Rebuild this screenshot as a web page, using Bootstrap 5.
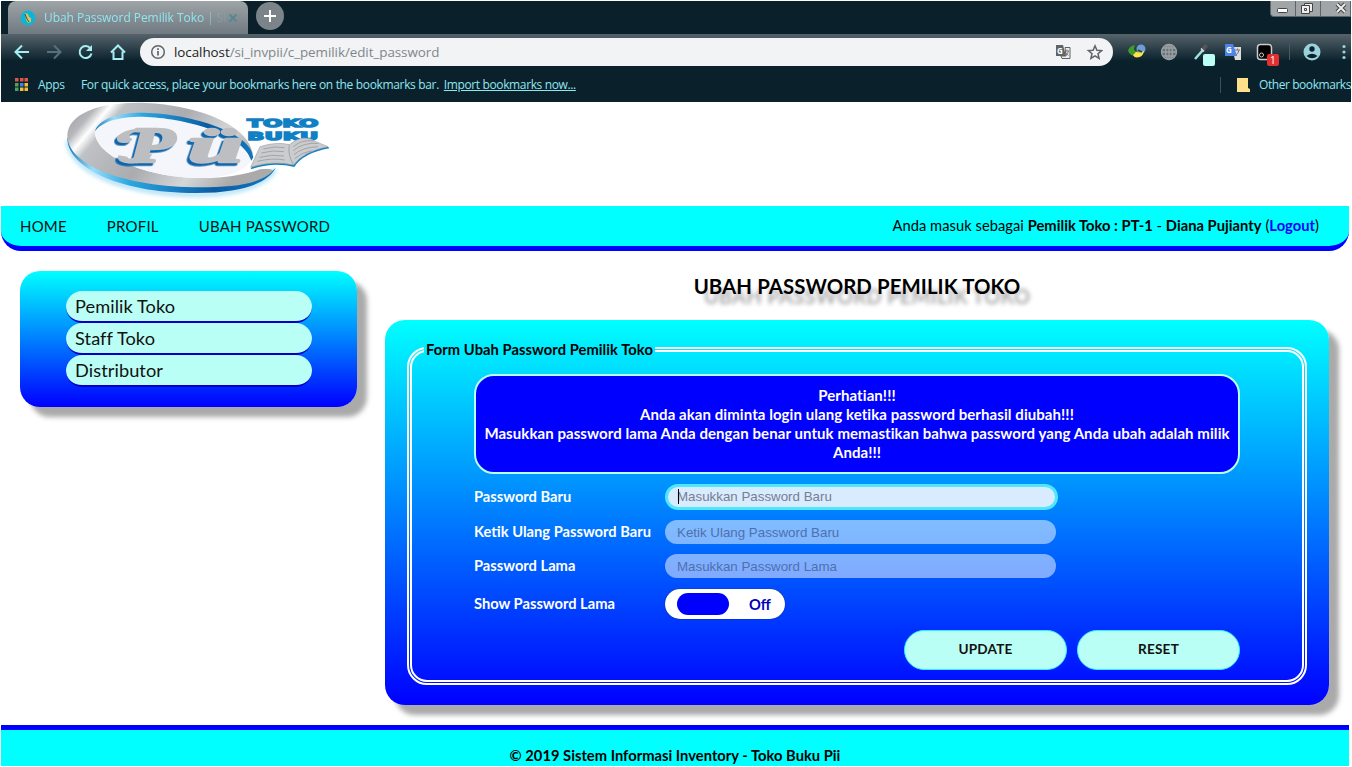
<!DOCTYPE html>
<html lang="id">
<head>
<meta charset="utf-8">
<title>Ubah Password Pemilik Toko | Sistem Informasi Inventory</title>
<link rel="stylesheet" href="https://cdn.jsdelivr.net/npm/bootstrap@5.3.0/dist/css/bootstrap.min.css">
<style>
body{width:1352px;height:767px;overflow:hidden;background:#fff;color:#000;font-family:Lato,"Liberation Sans",sans-serif;font-size:14.7px;padding:1px 2px 0 1px}
svg{display:block;flex:none}
.browser{height:101px;width:1350px;background:#0a212c;color:#8fe6f0;font-family:"Open Sans","Noto Sans",sans-serif;font-size:12px;overflow:hidden}
.tabstrip{height:33px;padding-left:7px}
.tab-on{width:240px;height:33px;background:linear-gradient(#9ea4a7,#6f7a81);border-radius:8px 8px 0 0;padding-left:12px}
.tab-label{width:184px;-webkit-mask-image:linear-gradient(90deg,#000 155px,rgba(0,0,0,.15) 176px);letter-spacing:-.05px;margin-left:8px}
.plus{width:28px;height:28px;border-radius:50%;background:#7b8489;margin:1px 0 0 8px}
.win{width:81px;height:16px;background:#a0a5a8;border:1px solid #59666d;border-top:0;border-radius:0 0 0 4px}
.toolbar{height:35px;background:linear-gradient(#56636b,#0a212c 27px);padding-left:13px}
.navicons{margin-right:9px}
.omni{width:973px;height:28px;border-radius:14px;background:#f1f3f4;color:#80868b;padding:0 10px}
.url{font-size:13.4px;letter-spacing:-.05px;padding-top:1px}
.url span{color:#222}
.exts{margin-left:11px}
.marks{height:33px;padding:0 0 2px 14px;gap:16px}
.apps{width:50px;gap:10px}
.vline{width:1px;height:16px;background:#3c5059}
.hint{letter-spacing:-.34px}
.hint u{letter-spacing:-.37px;margin-left:2px}
.other{letter-spacing:-.44px;gap:9px}
.t{white-space:nowrap;display:inline-block}
.logo-bar{height:104px;padding-left:49px}
.letters{filter:drop-shadow(-8px 8px 0 #0e65ab)}
.site-nav{width:1348px;height:45px;background:#0ff;border-bottom:5px solid #00f;border-radius:0 0 20px 20px;padding:0 30px 0 19px;gap:40px}
.site-nav>a{color:#111;text-decoration:none;font-size:15px;letter-spacing:.2px}
.user{letter-spacing:.04px;padding-bottom:1px}
.user a{color:#00f;text-decoration:none}
.content-row{height:474px;padding:20px 0 0 19px;gap:28px}
.panel{background:linear-gradient(#0ff,#00f);border-radius:20px;box-shadow:10px 10px 5px #aaa}
.side{width:337px;height:136px;padding:20px 45px 0 46px}
.side a{height:32px;background:#b9fff5;border-bottom:2px solid #00c;border-radius:16px;padding-left:9px;color:#111;text-decoration:none;font-size:18.2px;letter-spacing:.08px;line-height:30px}
.heading{font-size:20.4px;font-weight:700;line-height:24px;text-shadow:10px 10px 4px #aaa;margin:3px 0 22px;letter-spacing:.07px}
.main{width:944px;height:385px;padding:19px 22px}
fieldset.frame{height:346px;border:5px double #fff;border-radius:20px;padding:0 62px;margin:0}
fieldset.frame legend{float:none;width:auto;font-size:14.7px;letter-spacing:.07px;font-weight:700;line-height:20px;margin:0 0 0 -50px;padding:0 2px;height:21px}
.warn{height:100px;background:#00f;border:2px solid #b9fff5;border-radius:20px;color:#fff;font-weight:700;font-size:15px;letter-spacing:.07px;line-height:19px;padding-top:10px;margin:14px 0 10px}
.form-line{margin-bottom:10px}
.lbl{width:191px;color:#fff;font-weight:700;line-height:20px;padding-bottom:2px}
.fld{width:391px;height:24px;border:0;border-radius:12px;background:rgba(255,255,255,.5);padding:0 12px;font:13.33px "Liberation Sans",Arial,sans-serif;outline:0}
.fld::placeholder{color:#4f70ad;opacity:1}
.fld.on{width:393px;height:26px;border:3px solid #4ee7fb;border-radius:13px;background:#d8ebff;padding:0 9px 1px}
.fld.on::placeholder{color:#757f8f}
.caret{left:13px;top:5px;width:1px;height:15px;background:#000}
.sw{width:120px;height:30px;border-radius:15px;background:#fff;box-shadow:0 0 1px #003;padding-left:12px;color:#00b;font-weight:700;margin-top:1px}
.knob{width:52px;height:22px;border-radius:11px;background:#00f;margin-right:20px}
.actions{gap:10px;padding-top:1px}
.go{width:163px;height:40px;border-radius:20px;background:#b9fff5;border:1px solid #3ef;color:#111;font:700 13.6px Lato,sans-serif;padding:0 0 2px;letter-spacing:.2px}
.foot{width:1348px;height:41px;border-top:5px solid #00f;background:#0ff;font-weight:700;padding-top:14px;letter-spacing:.03px}
</style>
</head>
<body>
<header class="browser">
  <div class="tabstrip d-flex">
    <div class="tab-on d-flex align-items-center">
      <svg width="16" height="16" viewBox="0 0 16 16"><circle cx="8" cy="8" r="7.4" fill="#0ab6d6"/><path d="M5 3l3 1 1 3 2 1v4l-3 1-2-3z" fill="#d9c06a"/><path d="M5 4l2 5 2 3" stroke="#5b4a20" fill="none"/></svg>
      <div class="tab-label"><span class="t">Ubah Password Pemilik Toko | Si</span></div>
      <svg width="10" height="10" viewBox="0 0 10 10"><path d="M1.500 1.500l7 7M8.500 1.500l-7 7" stroke="#568692" stroke-width="1.800"/></svg>
    </div>
    <div class="plus d-flex align-items-center justify-content-center"><svg width="14" height="14" viewBox="0 0 14 14"><path d="M7 1v12M1 7h12" stroke="#fff" stroke-width="2"/></svg></div>
    <div class="win ms-auto"><svg width="80" height="15" viewBox="0 0 80 15"><path d="M24.500 0v15M49.500 0v15" stroke="#59666d"/><rect x="6.500" y="7.500" width="10" height="4" rx="1" fill="#fff" stroke="#444"/><g fill="#eee" stroke="#444"><path d="M33.500 2.500h8v8h-8z"/><path d="M30.500 4.500h8v8h-8z"/><path d="M33.500 7.500h2v2h-2z"/></g><path d="M66 3l8 8M74 3l-8 8" stroke="#444" stroke-width="4"/><path d="M66 3l8 8M74 3l-8 8" stroke="#eee" stroke-width="2"/></svg></div>
  </div>
  <div class="toolbar d-flex align-items-center">
    <svg class="navicons" width="117" height="20" viewBox="0 0 117 20" fill="none" stroke="#a5eef3" stroke-width="2"><path d="M15 10H2M8 3.500L1.500 10L8 16.500"/><path d="M33 10h13M40 3.500L46.500 10L40 16.500" stroke="#57717a"/><path d="M76.500 6.500A6 6 0 1 0 77.500 11.500"/><path d="M78 3v6h-6z" fill="#a5eef3" stroke="none"/><path d="M97 10.500l7-7 7 7M99.500 9.500v7.500h9v-7.500"/></svg>
    <div class="omni d-flex align-items-center">
      <svg width="16" height="16" viewBox="0 0 16 16" class="me-2"><circle cx="8" cy="8" r="6.300" fill="none" stroke="#5f6368" stroke-width="1.500"/><path d="M8 7v4.500M8 4.200v1.700" stroke="#5f6368" stroke-width="1.700"/></svg>
      <span class="t url"><span>localhost</span>/si_invpii/c_pemilik/edit_password</span>
      <svg width="48" height="18" viewBox="0 0 48 18" class="ms-auto"><path d="M1 2h7l3 11H1z" fill="#5f6368"/><path d="M10 4.500h5v11H7l-1-2.500h5z" fill="#eee" stroke="#5f6368"/><path d="M10 8h4M12 6.500V8M13.500 8q-.5 3-3 5M11 9.500q1 2 2.500 3" stroke="#5f6368" stroke-width=".8" fill="none"/><text x="2" y="10.500" font-size="8" fill="#fff" font-weight="700">G</text><path d="M40 2.800l1.900 4.400 4.700.4-3.600 3.100 1.100 4.700-4.100-2.500-4.100 2.500 1.100-4.700-3.600-3.100 4.700-.4z" fill="none" stroke="#5f6368" stroke-width="1.500"/></svg>
    </div>
    <svg class="exts" width="226" height="30" viewBox="0 0 226 30">
      <circle cx="17" cy="12" r="4.500" fill="#6c9dd8"/><path d="M4 14q1-5 7-6-2 4 0 6l6 1-5 4q-6 0-8-5z" fill="#3f9b2a"/><path d="M9 18l3-3 5 .5 3-2q-1 7-7 7-3 0-4-2.500z" fill="#ffe14a"/><path d="M14 13l4 2" stroke="#2c4a30" stroke-width="1.500"/>
      <g stroke="#9ba1a4" fill="none" stroke-width="1.300"><circle cx="45" cy="15" r="7.500" fill="#66717a"/><ellipse cx="45" cy="15" rx="3.500" ry="7.500"/><path d="M45 7.500v15M37.500 15h15M39 11h12M39 19h12"/></g>
      <path d="M71 22l8-9" stroke="#9de3e3" stroke-width="2.500"/><path d="M78.500 13l4-5" stroke="#555" stroke-width="4"/><path d="M77 11.500l3 3" stroke="#ddd" stroke-width="1.500"/><rect x="79" y="17" width="12" height="12" rx="2" fill="#b9fff5"/>
      <path d="M108 10h9v13h-6z" fill="#ddd"/><path d="M101 7h8l4 12h-12z" fill="#4a86e8"/><text x="102" y="16" font-size="8" font-weight="700" fill="#fff">G</text><path d="M111 13h5M113.500 11.500V13M115 13q-1 4-3 5" stroke="#777" fill="none"/>
      <rect x="133.500" y="7.500" width="14" height="15" rx="3" fill="#000" stroke="#ccc" stroke-width="1.500"/><circle cx="137.500" cy="18" r="2" fill="none" stroke="#ccc"/><rect x="143" y="17" width="12" height="12" rx="2" fill="#e22f2f"/><text x="146" y="26.500" font-size="10" fill="#fff">1</text>
      <path d="M165.500 7v16" stroke="#4a5a62"/>
      <circle cx="188" cy="15" r="8.500" fill="#9bd3dd"/><circle cx="188" cy="12" r="2.700" fill="#0a212c"/><path d="M182.500 19q5.500-4.500 11 0-5.500 4.500-11 0" fill="#0a212c"/>
      <g fill="#9bd3dd"><circle cx="220" cy="9.500" r="1.600"/><circle cx="220" cy="15" r="1.600"/><circle cx="220" cy="20.500" r="1.600"/></g>
    </svg>
  </div>
  <div class="marks d-flex align-items-center">
    <div class="apps d-flex align-items-center">
      <svg width="13" height="13" viewBox="0 0 13 13"><path d="M0 0h3.500v3.500H0zM5 0h3.500v3.500H5zM9.500 0H13v3.500H9.500z" fill="#e0554a"/><path d="M0 5h3.500v3.500H0zM0 9.500h3.500V13H0z" fill="#4ea35a"/><path d="M5 5h3.500v3.500H5z" fill="#4a7fe0"/><path d="M9.500 5H13v3.500H9.500zM5 9.500h3.500V13H5zM9.500 9.500H13V13H9.500z" fill="#f0bf3c"/></svg>
      <span class="t hint">Apps</span>
    </div>
    <span class="t hint">For quick access, place your bookmarks here on the bookmarks bar. <u>Import bookmarks now...</u></span>
    <span class="vline ms-auto"></span>
    <div class="other d-flex align-items-center ms-n1">
      <svg width="13" height="14" viewBox="0 0 13 14"><path d="M0 0h11v10l2 1v3H0z" fill="#fde08a"/></svg>
      <span class="t">Other bookmarks</span>
    </div>
  </div>
</header>

<div class="logo-bar">
  <svg width="300" height="104" viewBox="0 12 900 312" role="img" aria-label="Toko Buku Pii">
    <defs>
      <linearGradient id="ring" x1="0" y1="0" x2="1" y2=".35"><stop offset="0" stop-color="#999ba0"/><stop offset=".14" stop-color="#b5b7ba"/><stop offset=".2" stop-color="#fff"/><stop offset=".26" stop-color="#bfc1c4"/><stop offset=".55" stop-color="#aaacb0"/><stop offset=".8" stop-color="#d5d6d8"/><stop offset="1" stop-color="#aaa"/></linearGradient>
      <linearGradient id="blue"><stop offset="0" stop-color="#1179b8"/><stop offset=".12" stop-color="#9adcf8"/><stop offset=".3" stop-color="#2ba6e0"/><stop offset=".7" stop-color="#0a5da5"/><stop offset="1" stop-color="#1177bd"/></linearGradient>
      <filter id="glow" x="-10%" y="-20%" width="120%" height="150%"><feGaussianBlur stdDeviation="7"/></filter>
    </defs>
    <path d="M52 130C75 240 260 290 450 290C580 288 650 255 675 215" fill="none" stroke="#a8ddf5" stroke-width="12" filter="url(#glow)"/>
    <path d="M52 118C50 200 190 285 440 285C590 285 655 250 677 210C640 248 560 262 450 262C250 262 100 210 52 118z" fill="url(#blue)"/>
    <path d="M52 112C55 45 150 12 275 14C420 18 590 70 608 165L600 185C580 100 400 52 270 52C190 52 140 75 135 105C140 180 300 240 450 240C540 240 600 225 630 214C655 212 670 213 668 220C630 258 550 268 450 268C220 268 50 200 52 112z" fill="url(#ring)"/>
    <path d="M135 103C150 70 200 56 280 56C410 60 590 110 602 187C590 220 520 240 450 240C300 240 140 180 135 103z" fill="#f5f6fb"/>
    <path d="M135 100C145 65 200 43 280 44C430 48 605 105 610 178L604 188C580 105 400 60 280 56C200 56 155 72 135 100z" fill="url(#blue)"/>
    <g class="letters" fill="#bcbec2" stroke="#bcbec2" stroke-linejoin="round">
      <g font-family="Liberation Serif,serif" font-weight="700" font-style="italic" stroke-width="8"><text x="236" y="193" font-size="150" textLength="138" lengthAdjust="spacingAndGlyphs">P</text><text x="415" y="191" font-size="150" textLength="164" lengthAdjust="spacingAndGlyphs">ü</text></g>
      <path d="M262 92C215 96 190 118 205 131C222 140 244 134 247 122C232 120 236 104 262 102z" stroke="none"/>
      <path d="M206 172C196 188 220 199 262 196C290 192 300 184 306 168L262 172C248 182 234 186 232 176z" stroke="none"/>
    </g>
    <g font-family="DejaVu Sans,sans-serif" font-weight="700" fill="#1080c4" stroke="#1080c4" stroke-width="4"><text x="592" y="88" font-size="34" textLength="213" lengthAdjust="spacingAndGlyphs">TOKO</text><text x="592" y="126" font-size="34" textLength="213" lengthAdjust="spacingAndGlyphs">BUKU</text></g>
    <path d="M602 214L630 152L835 147L838 151Q760 165 733 207Q670 190 602 214z" fill="#1080c4"/>
    <path d="M602 208L630 146Q680 130 718 140Q760 105 800 132L834 146Q760 160 731 201Q670 186 602 208z" fill="#cbccce" stroke="#a0a3a7" stroke-width="2"/>
    <path d="M718 140Q712 170 731 201M640 153q35-10 64-4M634 165q35-10 68-4M628 178q38-10 74-4M622 190q45-11 82-4M730 146q25-22 60-17M730 158q28-25 75-22M732 170q25-22 72-24M734 182q20-18 50-24" fill="none" stroke="#8d9095" stroke-width="2"/>
  </svg>
</div>

<nav class="site-nav d-flex align-items-center">
  <a href="#" class="t">HOME</a>
  <a href="#" class="t">PROFIL</a>
  <a href="#" class="t">UBAH PASSWORD</a>
  <span class="t ms-auto user">Anda masuk sebagai <b>Pemilik Toko : PT-1</b> - <b>Diana Pujianty</b> (<a href="#"><b>Logout</b></a>)</span>
</nav>

<div class="content-row d-flex align-items-start">
  <aside class="panel side d-flex flex-column">
    <a href="#">Pemilik Toko</a>
    <a href="#">Staff Toko</a>
    <a href="#">Distributor</a>
  </aside>
  <main>
    <h1 class="heading text-center">UBAH PASSWORD PEMILIK TOKO</h1>
    <form class="panel main">
      <fieldset class="frame">
        <legend>Form Ubah Password Pemilik Toko</legend>
        <div class="warn text-center text-nowrap">Perhatian!!!<br>Anda akan diminta login ulang ketika password berhasil diubah!!!<br>Masukkan password lama Anda dengan benar untuk memastikan bahwa password yang Anda ubah adalah milik<br>Anda!!!</div>
        <div class="form-line d-flex align-items-center"><label class="lbl">Password Baru</label><div class="position-relative d-flex"><input class="fld on" placeholder="Masukkan Password Baru"><i class="caret position-absolute"></i></div></div>
        <div class="form-line d-flex align-items-center"><label class="lbl">Ketik Ulang Password Baru</label><input class="fld" placeholder="Ketik Ulang Password Baru"></div>
        <div class="form-line d-flex align-items-center"><label class="lbl">Password Lama</label><input class="fld" placeholder="Masukkan Password Lama"></div>
        <div class="form-line d-flex align-items-center"><label class="lbl">Show Password Lama</label><div class="sw d-flex align-items-center"><span class="knob"></span><span>Off</span></div></div>
        <div class="actions d-flex justify-content-end"><button type="button" class="go">UPDATE</button><button type="button" class="go">RESET</button></div>
      </fieldset>
    </form>
  </main>
</div>
<footer class="foot text-center">© 2019 Sistem Informasi Inventory - Toko Buku Pii</footer>
<script src="https://cdn.jsdelivr.net/npm/bootstrap@5.3.0/dist/js/bootstrap.bundle.min.js"></script>
</body>
</html>
